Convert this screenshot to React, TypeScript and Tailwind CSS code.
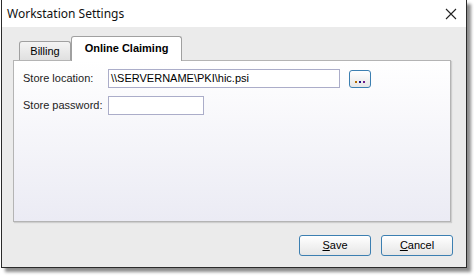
export default function App() {
  return (
    <div className="h-[276px] w-[474px] bg-white" style={{ fontFamily: '"Liberation Sans", Arial, sans-serif' }}>
      <div className="ml-[1px] flex h-[268px] w-[466px] flex-col border-x border-b border-[#2b2b2b] bg-[#ebebeb] shadow-[4px_4px_3px_rgba(0,0,0,0.45)]">
        <div className="flex h-[27px] shrink-0 items-center justify-between bg-white pl-[5px] pr-[9px]">
          <span className="text-[12px] text-[#111]" style={{ fontFamily: '"Noto Sans", sans-serif' }}>
            Workstation Settings
          </span>
          <svg width="12" height="12" viewBox="0 0 12 12">
            <path d="M1 1L11 11M11 1L1 11" stroke="#222" strokeWidth="1.1" />
          </svg>
        </div>

        <div className="flex flex-1 flex-col pl-[11px] pr-[15px] pt-[9px]">
          <div className="flex h-[24px] items-end pl-[6px]">
            <div className="flex h-[19px] w-[52px] items-center justify-center rounded-t-[3px] border border-b-0 border-[#a0a0a0] bg-gradient-to-b from-[#f4f4f4] to-[#e0e0e0] text-[11px] text-black">
              Billing
            </div>
            <div className="relative z-10 -mb-[1px] flex h-[25px] w-[111px] items-center justify-center rounded-t-[3px] border border-b-0 border-[#a0a0a0] bg-white pb-[2px] text-[11px] font-bold text-black">
              Online Claiming
            </div>
          </div>

          <div className="flex h-[162px] flex-col gap-[8px] border border-[#b4b4b4] bg-gradient-to-b from-white to-[#ebebf4] pl-[9px] pt-[8px] shadow-[1px_1px_1px_rgba(0,0,0,0.12)]">
            <div className="flex items-center">
              <span className="w-[85px] text-[11px] text-[#222]">Store location:</span>
              <div className="flex h-[19px] w-[232px] items-center border border-[#abadc9] bg-white pl-[2px] text-[11px] text-black">
                \\SERVERNAME\PKI\hic.psi
              </div>
              <button className="ml-[9px] flex h-[18px] w-[22px] items-end justify-center gap-[2px] rounded-[3px] border border-[#3c7fb1] bg-gradient-to-b from-white to-[#e6e6e6] pb-[4px]">
                <span className="h-[2px] w-[2px] bg-[#b06a00]" />
                <span className="h-[2px] w-[2px] bg-[#1a1a8a]" />
                <span className="h-[2px] w-[2px] bg-[#6a1a8a]" />
              </button>
            </div>
            <div className="flex items-center">
              <span className="w-[85px] text-[11px] text-[#222]">Store password:</span>
              <div className="h-[19px] w-[96px] border border-[#abadc9] bg-white" />
            </div>
          </div>

          <div className="mt-[13px] flex justify-end gap-[10px]">
            <button className="flex h-[21px] w-[72px] items-center justify-center rounded-[3px] border border-[#3c7fb1] bg-gradient-to-b from-white to-[#e6e6e6] text-[11px] text-black">
              <span><u>S</u>ave</span>
            </button>
            <button className="-mr-[2px] flex h-[21px] w-[72px] items-center justify-center rounded-[3px] border border-[#3c7fb1] bg-gradient-to-b from-white to-[#e6e6e6] text-[11px] text-black">
              <span><u>C</u>ancel</span>
            </button>
          </div>
        </div>
      </div>
    </div>
  );
}
